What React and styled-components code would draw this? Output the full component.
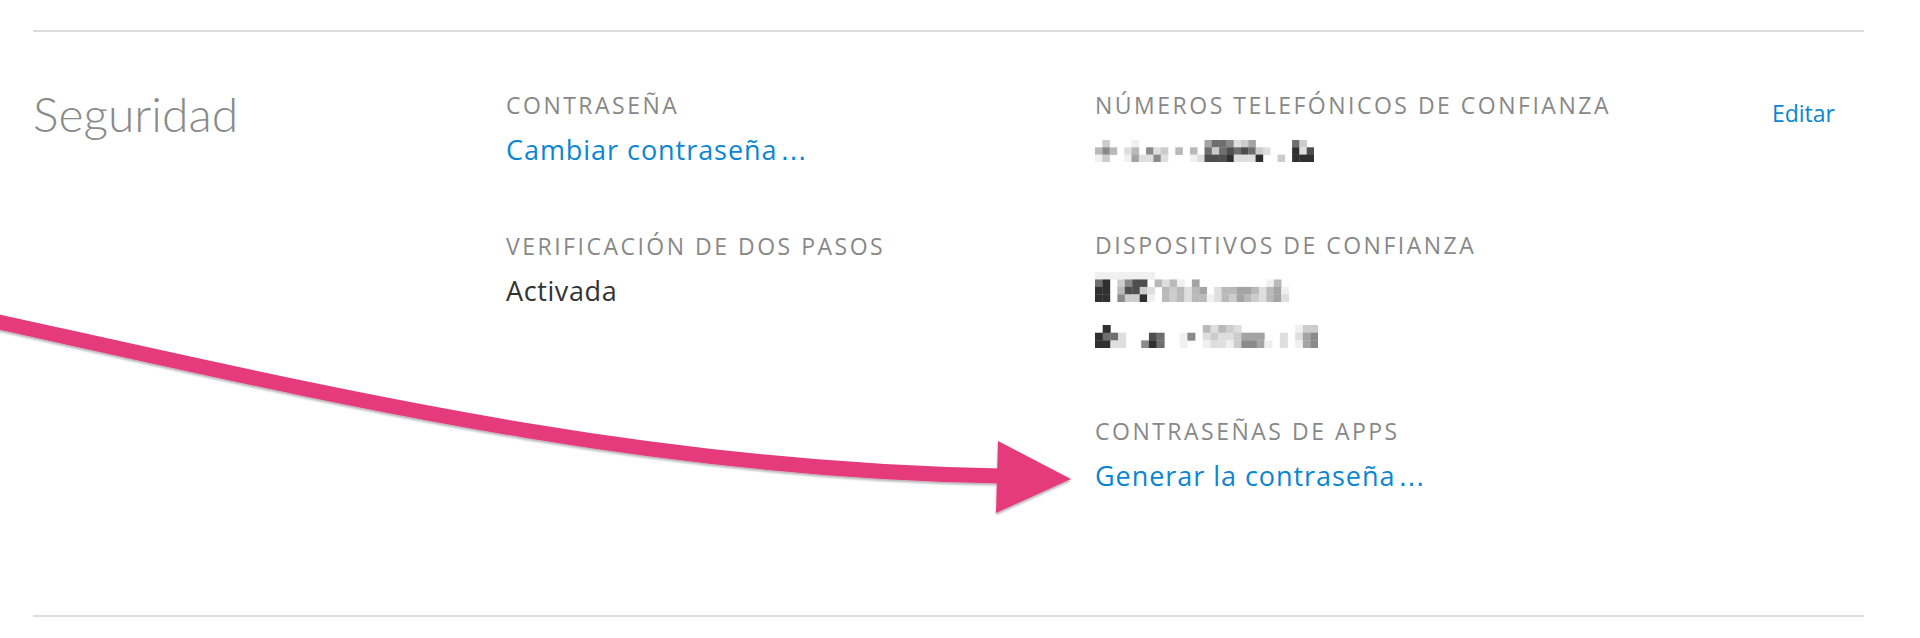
import React from "react";
import styled, { createGlobalStyle } from "styled-components";

const Global = createGlobalStyle`
  html, body {
    margin: 0;
    padding: 0;
    background: #fff;
  }
  body {
    font-family: "Open Sans", "Liberation Sans", sans-serif;
    -webkit-font-smoothing: antialiased;
  }
`;

const Page = styled.div`
  position: relative;
  width: 1920px;
  height: 638px;
  overflow: hidden;
  padding: 30px 56px 0 33px;
  box-sizing: border-box;
`;

const Section = styled.section`
  display: grid;
  grid-template-columns: 473px 589px 1fr;
  height: 587px;
  padding-top: 58px;
  box-sizing: border-box;
  border-top: 2px solid #dcdcdc;
  border-bottom: 2px solid #dcdcdc;
`;

const Title = styled.h2`
  margin: 0;
  font-family: Lato, "Open Sans", sans-serif;
  font-weight: 300;
  font-size: 48px;
  line-height: 47px;
  color: #8a8a8a;
`;

const Column = styled.div`
  display: flex;
  flex-direction: column;
  gap: 57px;
`;

const Side = styled.div`
  display: flex;
  justify-content: space-between;
  align-items: flex-start;
`;

const Label = styled.div`
  font-size: 23px;
  line-height: 30px;
  letter-spacing: 2.5px;
  color: #888;
  margin-bottom: 7px;
`;

const Value = styled.div`
  font-size: 27px;
  line-height: 46px;
  letter-spacing: ${(p) => (p.link ? "0.95px" : "0.6px")};
  color: ${(p) => (p.link ? "#0a86d1" : "#333")};
  cursor: ${(p) => (p.link ? "pointer" : "default")};
`;

// the reference's ellipsis has wide-set dots
const Dots = styled.span`
  font-family: "DejaVu Sans", sans-serif;
  font-size: 26px;
  padding-left: 3px;
`;

const Hidden = styled.div`
  height: 46px;
  display: flex;
  align-items: flex-end;
  padding-bottom: 11px;
  box-sizing: border-box;
`;

const Edit = styled.a`
  margin: 8px 29px 0 0;
  font-size: 23px;
  line-height: 30px;
  color: #0a86d1;
  cursor: pointer;
`;

const Overlay = styled.svg`
  position: absolute;
  top: 0;
  left: 0;
  pointer-events: none;
`;

const greys = {
  1: "#f0f0f0",
  2: "#dedede",
  3: "#cccccc",
  4: "#b9b9b9",
  5: "#a4a4a4",
  6: "#8a8a8a",
  7: "#6e6e6e",
  8: "#4e4e4e",
  9: "#303030",
};

// pixelated (censored) numbers and device names
const phone = [
  "030001000000000577623500000730",
  "464024062304040737878732000928",
  "130015226200012888922290030999",
];

const device1 = [
  "11111111000000000000000000",
  "79036880424105000000000140",
  "99048832043424502445542451",
  "99063391043424412435432452",
];

const device2 = [
  "09000000000000424320000000133",
  "97720008700160232235550020256",
  "99220069700100122136651020156",
];

const Mosaic = ({ rows, size = 7.45 }) => {
  const cols = Math.max(...rows.map((r) => r.length));
  return (
    <svg width={cols * size} height={rows.length * size}>
      {rows.map((r, y) =>
        r.split("").map((c, x) =>
          c === "0" ? null : (
            <rect
              key={`${x}-${y}`}
              x={x * size}
              y={y * size}
              width={size + 0.3}
              height={size + 0.3}
              fill={greys[c]}
            />
          )
        )
      )}
    </svg>
  );
};

const Arrow = () => (
  <Overlay width="1920" height="638">
    <defs>
      <filter id="shadow" x="-5%" y="-20%" width="110%" height="140%">
        <feDropShadow dx="0" dy="2" stdDeviation="1.3" floodColor="#000" floodOpacity="0.3" />
      </filter>
    </defs>
    <g filter="url(#shadow)" fill="#e53a7b">
      <path
        d="M -10 320 C 330 395, 640 470, 1002 476"
        fill="none"
        stroke="#e53a7b"
        strokeWidth="15"
      />
      <polygon points="998,441 1071,479 996,513" />
    </g>
  </Overlay>
);

export default function App() {
  return (
    <>
      <Global />
      <Page>
        <Section>
          <Title>Seguridad</Title>

          <Column>
            <div>
              <Label>CONTRASEÑA</Label>
              <Value link>
                Cambiar contraseña<Dots>…</Dots>
              </Value>
            </div>
            <div>
              <Label>VERIFICACIÓN DE DOS PASOS</Label>
              <Value>Activada</Value>
            </div>
          </Column>

          <Side>
            <Column>
              <div>
                <Label>NÚMEROS TELEFÓNICOS DE CONFIANZA</Label>
                <Hidden>
                  <Mosaic rows={phone} size={7.3} />
                </Hidden>
              </div>
              <div>
                <Label>DISPOSITIVOS DE CONFIANZA</Label>
                <Hidden>
                  <Mosaic rows={device1} />
                </Hidden>
                <Hidden>
                  <Mosaic rows={device2} size={7.7} />
                </Hidden>
              </div>
              <div>
                <Label>CONTRASEÑAS DE APPS</Label>
                <Value link>
                  Generar la contraseña<Dots>…</Dots>
                </Value>
              </div>
            </Column>
            <Edit>Editar</Edit>
          </Side>
        </Section>
        <Arrow />
      </Page>
    </>
  );
}
